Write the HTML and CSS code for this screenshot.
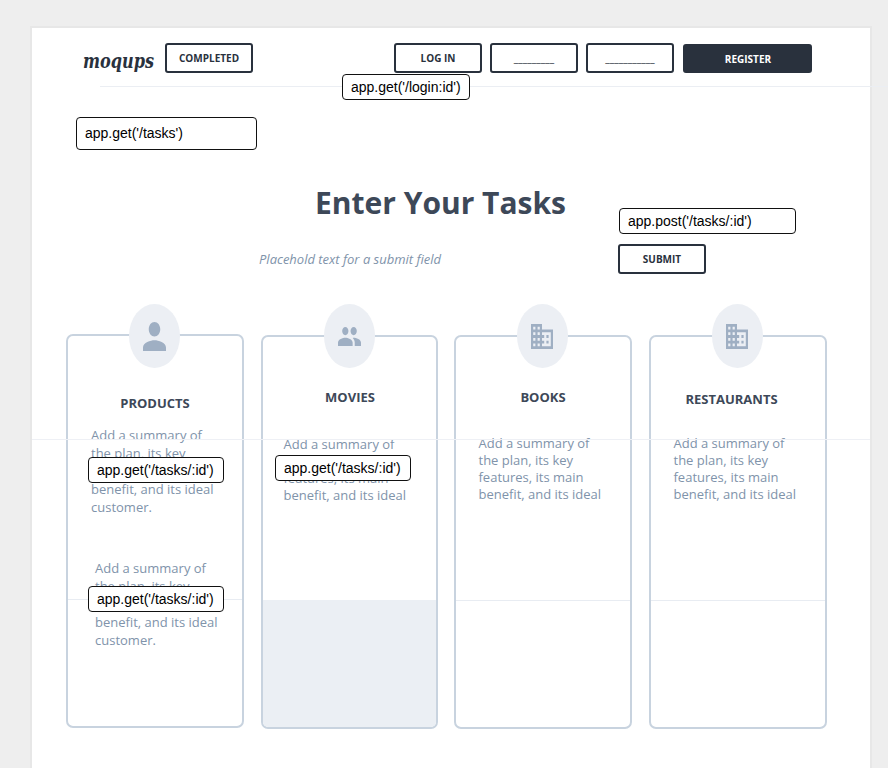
FILE: index.html
```html
<!DOCTYPE html>
<html lang="en">
<head>
<meta charset="utf-8">
<title>Tasks wireframe</title>
<link rel="stylesheet" href="styles.css">
</head>
<body>
<main class="page">
  <header class="header">
    <div class="logo"><svg width="80" height="40" viewBox="0 0 80 40"><text x="0" y="24.5" textLength="71" lengthAdjust="spacingAndGlyphs">moqups</text></svg></div>
    <div class="btn">COMPLETED</div>
    <nav class="nav">
      <div class="btn">LOG IN</div>
      <div class="btn blank">_________</div>
      <div class="btn blank">___________</div>
      <div class="btn btn-solid">REGISTER</div>
    </nav>
    <div class="tag tag-login">app.get('/login:id')</div>
  </header>
  <div class="rule"></div>
  <div class="tag tag-tasks">app.get('/tasks')</div>
  <section class="hero">
    <div class="intro">
      <h1>Enter Your Tasks</h1>
      <p class="hint">Placehold text for a submit field</p>
    </div>
    <div class="actions">
      <div class="tag tag-post">app.post('/tasks/:id')</div>
      <div class="btn">SUBMIT</div>
    </div>
  </section>
  <section class="cards">
    <article class="card products">
      <div class="avatar"><svg class="person" viewBox="4 4 16 16" preserveAspectRatio="none"><path d="M12 12c2.21 0 4-1.79 4-4s-1.79-4-4-4-4 1.79-4 4 1.79 4 4 4zm0 2c-2.67 0-8 1.34-8 4v2h16v-2c0-2.66-5.33-4-8-4z"/></svg></div>
      <h2>PRODUCTS</h2>
      <p>Add a summary of<br>the plan, its key<br>features, its main<br>benefit, and its ideal<br>customer.</p>
      <p class="second">Add a summary of<br>the plan, its key<br>features, its main<br>benefit, and its ideal<br>customer.</p>
      <div class="split"></div>
      <div class="tag tag-over tag-first">app.get('/tasks/:id')</div>
      <div class="tag tag-over tag-second">app.get('/tasks/:id')</div>
    </article>
    <article class="card movies">
      <div class="avatar"><svg class="people" viewBox="1 5 22 14" preserveAspectRatio="none"><path d="M16 11c1.66 0 2.99-1.34 2.99-3S17.66 5 16 5s-3 1.34-3 3 1.34 3 3 3zm-8 0c1.66 0 2.99-1.34 2.99-3S9.66 5 8 5 5 6.34 5 8s1.34 3 3 3zm0 2c-2.33 0-7 1.17-7 3.5V19h14v-2.500c0-2.330-4.670-3.500-7-3.500zm8 0c-.29 0-.62.02-.97.05 1.160.84 1.970 1.970 1.970 3.450V19h6v-2.500c0-2.330-4.670-3.500-7-3.500z"/></svg></div>
      <h2>MOVIES</h2>
      <p>Add a summary of<br>the plan, its key<br>features, its main<br>benefit, and its ideal</p>
      <div class="split split-filled"></div>
      <div class="tag tag-over tag-movies">app.get('/tasks/:id')</div>
    </article>
    <article class="card books">
      <div class="avatar"><svg class="building" viewBox="2 3 20 18" preserveAspectRatio="none"><path d="M12 7V3H2v18h20V7H12zM6 19H4v-2h2v2zm0-4H4v-2h2v2zm0-4H4V9h2v2zm0-4H4V5h2v2zm4 12H8v-2h2v2zm0-4H8v-2h2v2zm0-4H8V9h2v2zm0-4H8V5h2v2zm10 12h-8v-2h2v-2h-2v-2h2v-2h-2V9h8v10zm-2-8h-2v2h2v-2zm0 4h-2v2h2v-2z"/></svg></div>
      <h2>BOOKS</h2>
      <p>Add a summary of<br>the plan, its key<br>features, its main<br>benefit, and its ideal</p>
      <div class="split"></div>
    </article>
    <article class="card restaurants">
      <div class="avatar"><svg class="building" viewBox="2 3 20 18" preserveAspectRatio="none"><path d="M12 7V3H2v18h20V7H12zM6 19H4v-2h2v2zm0-4H4v-2h2v2zm0-4H4V9h2v2zm0-4H4V5h2v2zm4 12H8v-2h2v2zm0-4H8v-2h2v2zm0-4H8V9h2v2zm0-4H8V5h2v2zm10 12h-8v-2h2v-2h-2v-2h2v-2h-2V9h8v10zm-2-8h-2v2h2v-2zm0 4h-2v2h2v-2z"/></svg></div>
      <h2>RESTAURANTS</h2>
      <p>Add a summary of<br>the plan, its key<br>features, its main<br>benefit, and its ideal</p>
      <div class="split"></div>
    </article>
    <div class="crossline"></div>
  </section>
</main>
</body>
</html>
```
FILE: styles.css
```css
* { box-sizing: border-box; }
html, body { height: 768px; overflow: hidden; }
body {
  margin: 0;
  padding: 26px 0 0 30px;
  background: #eee;
  font-family: "Open Sans", sans-serif;
  color: #3d4858;
}
h1, h2, p { margin: 0; }
.page {
  width: 842px;
  height: 760px;
  background: #fff;
  border: 2px solid #e7e7e7;
}

/* Header */
.header {
  position: relative;
  display: flex;
  height: 58px;
  padding: 15px 0 0 51px;
}
.logo { width: 82px; }
.logo svg { display: block; overflow: visible; }
.logo text {
  font: italic bold 21px "DejaVu Serif", serif;
  fill: #29313d;
}
.nav { display: flex; gap: 8px; margin-left: 141px; }
.btn {
  width: 88px;
  height: 30px;
  border: 2px solid #29313d;
  border-radius: 3px;
  font-size: 10px;
  font-weight: 700;
  line-height: 27px;
  text-align: center;
  color: #29313d;
  background: #fff;
}
.btn-solid {
  width: 129px;
  height: 29px;
  margin: 1px 0 0 1px;
  padding-left: 1px;
  background: #29313d;
  color: #fff;
}
.blank { font-weight: 400; letter-spacing: 0.1px; }
.rule {
  width: 788px;
  height: 1px;
  margin-left: 68px;
  background: #ebeef3;
}

/* Route labels */
.tag {
  z-index: 2;
  height: 26px;
  padding-left: 8px;
  border: 1px solid #111;
  border-radius: 4px;
  background: #fff;
  font: 14px/24px "Liberation Sans", sans-serif;
  color: #000;
  white-space: nowrap;
}
.tag-login { position: absolute; left: 310px; top: 46px; width: 128px; }
.tag-tasks { width: 181px; height: 33px; margin: 30px 0 0 44px; line-height: 31px; }
.tag-post { width: 177px; margin: 0 0 10px 1px; }
.tag-over { position: absolute; width: 136px; }

/* Hero */
.hero { display: flex; height: 154px; }
.intro { width: 586px; padding-top: 30px; }
h1 { padding-left: 283px; font-size: 30px; line-height: 46px; }
.hint {
  padding: 24px 0 0 227px;
  font-size: 13px;
  line-height: 18px;
  font-style: italic;
  color: #8093aa;
}
.actions { padding-top: 58px; }

/* Cards */
.cards { position: relative; display: flex; padding-left: 34px; align-items: flex-start; }
.card {
  position: relative;
  width: 178px;
  height: 394px;
  margin: 31px 17px 0 0;
  border: 2px solid #c8d3df;
  border-radius: 7px;
}
.avatar {
  position: relative;
  z-index: 1;
  display: flex;
  align-items: center;
  justify-content: center;
  width: 51px;
  height: 64px;
  margin: -33px 0 0 61px;
  border-radius: 50%;
  background: #eceff4;
}
.avatar svg { fill: #9fafc3; }
.person { width: 23px; height: 29px; }
.people { width: 23px; height: 19px; margin-top: 1px; }
.building { width: 22px; height: 25px; margin: 1px 1px 0 0; }
h2 { margin-top: 20px; font-size: 13px; line-height: 18px; text-align: center; }
.card p {
  padding-left: 22px;
  font-size: 13px;
  line-height: 17px;
  color: #8093aa;
  white-space: nowrap;
}
.split {
  position: absolute;
  left: 0;
  right: 0;
  top: 263px;
  height: 1px;
  background: #e8ecf2;
}
.split-filled { height: auto; bottom: 0; background: #ebeff4; border-radius: 0 0 5px 5px; }
.crossline {
  position: absolute;
  left: 0;
  right: 0;
  top: 135px;
  height: 1px;
  background: #eef0f5;
}

.products { margin-top: 30px; }
.products .avatar { margin-top: -32px; }
.products h2 { margin-top: 26px; }
.products p { margin-top: 14px; padding-left: 23px; line-height: 18px; }
.products .second { margin-top: 43px; padding-left: 27px; }
.tag-first { left: 20px; top: 121px; }
.tag-second { left: 20px; top: 250px; }

.movies { width: 177px; margin-right: 16px; }
.movies h2 { padding-left: 1px; }
.movies p { margin-top: 30px; padding-left: 20.5px; }
.tag-movies { left: 12px; top: 118px; }

.books p, .restaurants p { margin-top: 29px; padding-left: 22.5px; }
.restaurants h2 { margin-top: 22px; padding-right: 13px; }
.restaurants p { margin-top: 27px; }
```
